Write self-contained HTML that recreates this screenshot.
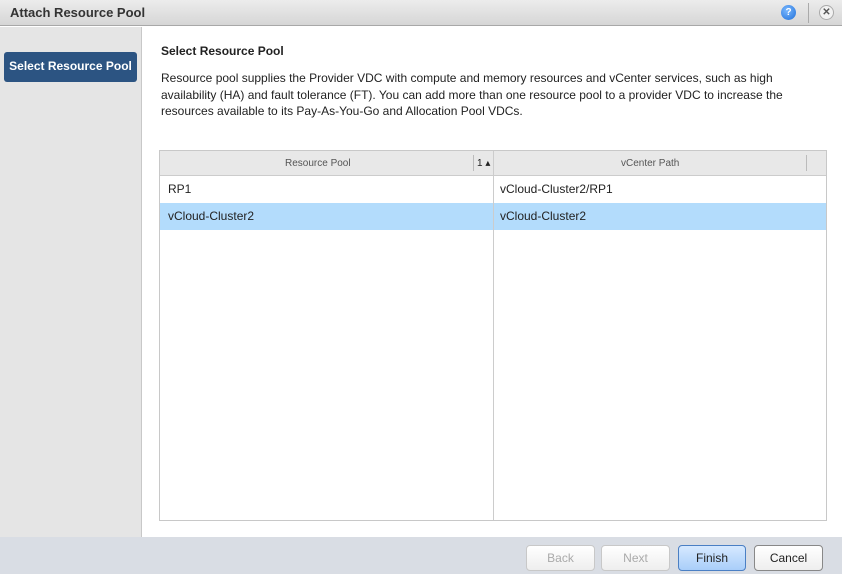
<!DOCTYPE html>
<html><head><style>
*{margin:0;padding:0;box-sizing:border-box}
body{width:842px;height:574px;overflow:hidden;font-family:"Liberation Sans",sans-serif;background:#fff;position:relative;color:#222}
.title{position:absolute;left:0;top:0;width:842px;height:26px;background:linear-gradient(#ececec,#d6d6d6);border-bottom:1px solid #a8a8a8}
.title span{position:absolute;left:10px;top:5px;font-size:13px;font-weight:bold;color:#333}
.side{position:absolute;left:0;top:27px;width:142px;height:510px;background:#e5e5e5;border-right:1px solid #c8c8c8}
.step{position:absolute;left:4px;top:52px;width:133px;height:30px;background:#2c5482;border-radius:3px;color:#fff;font-weight:bold;font-size:12px;line-height:29px;text-align:center}
h3{position:absolute;left:161px;top:44px;font-size:12px;font-weight:bold}
p{position:absolute;left:161px;top:70px;width:640px;font-size:12px;line-height:16.5px}
.grid{position:absolute;left:159px;top:150px;width:668px;height:371px;border:1px solid #c8c8c8}
.hd{height:25px;background:#e8e8e8;border-bottom:1px solid #ccc;position:relative;font-size:10px;color:#555}
.row{height:27px;position:relative;font-size:12px;line-height:27px}
.sel{background:#b3dcfc}
.vl{position:absolute;left:333px;top:0;bottom:0;width:1px;background:#ccc}
.footer{position:absolute;left:0;top:537px;width:842px;height:37px;background:#d9dde4}
.btn{position:absolute;top:545px;height:26px;border:1px solid #aaa;border-radius:4px;background:linear-gradient(#fff,#eee);font-size:12px;line-height:24px;text-align:center}
</style></head><body>
<div class="title"><span>Attach Resource Pool</span>
<div style="position:absolute;left:781px;top:5px;width:15px;height:15px;border-radius:50%;background:radial-gradient(circle at 40% 35%,#7ab8ff,#1f6fd8);color:#fff;font-size:10px;font-weight:bold;text-align:center;line-height:15px">?</div>
<div style="position:absolute;left:808px;top:3px;width:1px;height:20px;background:#aaa"></div>
<div style="position:absolute;left:819px;top:5px;width:15px;height:15px;border-radius:50%;background:#f2f2f2;border:1px solid #aaa;color:#555;font-size:10px;font-weight:bold;text-align:center;line-height:13px">✕</div>
</div>
<div class="side"></div>
<div class="step">Select Resource Pool</div>
<h3>Select Resource Pool</h3>
<p>Resource pool supplies the Provider VDC with compute and memory resources and vCenter services, such as high availability (HA) and fault tolerance (FT). You can add more than one resource pool to a provider VDC to increase the resources available to its Pay-As-You-Go and Allocation Pool VDCs.</p>
<div class="grid">
<div class="vl"></div>
<div class="hd"><span style="position:absolute;left:125px;top:7px">Resource Pool</span>
<div style="position:absolute;left:313px;top:4px;width:1px;height:16px;background:#bbb"></div>
<span style="position:absolute;left:317px;top:7px;color:#222">1 ▴</span>
<span style="position:absolute;left:461px;top:7px">vCenter Path</span>
<div style="position:absolute;left:646px;top:4px;width:1px;height:16px;background:#bbb"></div></div>
<div class="row"><span style="position:absolute;left:8px">RP1</span><span style="position:absolute;left:340px">vCloud-Cluster2/RP1</span></div>
<div class="row sel"><span style="position:absolute;left:8px">vCloud-Cluster2</span><span style="position:absolute;left:340px">vCloud-Cluster2</span></div>
<div class="vl"></div>
</div>
<div class="footer"></div>
<div class="btn" style="left:526px;width:69px;color:#aaa;border-color:#c8c8c8">Back</div>
<div class="btn" style="left:601px;width:69px;color:#aaa;border-color:#c8c8c8">Next</div>
<div class="btn" style="left:678px;width:68px;background:linear-gradient(#d6e9ff,#a9cef9);border-color:#4a7fc4">Finish</div>
<div class="btn" style="left:754px;width:69px;border-color:#888">Cancel</div>
</body></html>
